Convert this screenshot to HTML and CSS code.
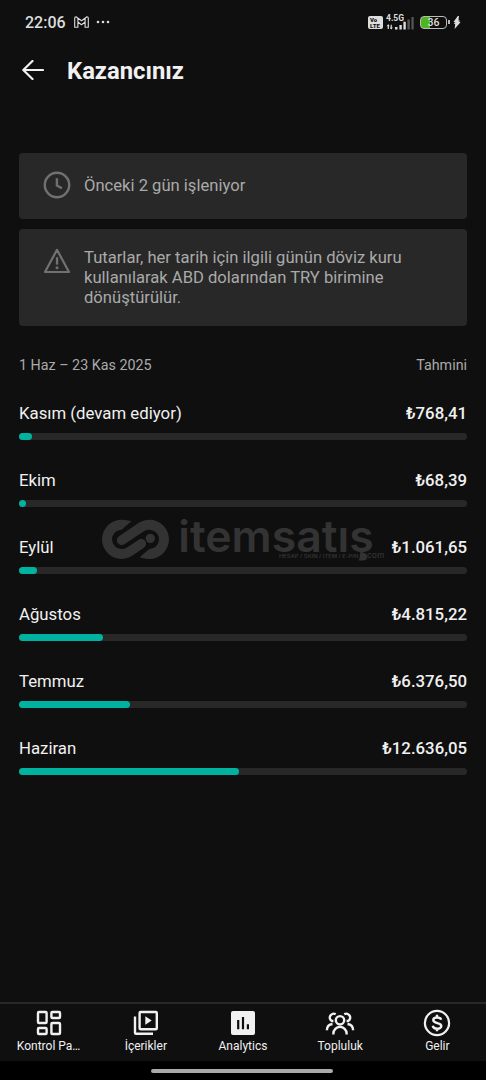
FILE: index.html
```html
<!DOCTYPE html>
<html lang="tr">
<head>
  <meta charset="UTF-8">
  <meta name="viewport" content="width=device-width, initial-scale=1">
  <title>Kazancınız</title>
  <link rel="stylesheet" href="styles.css">
</head>
<body>
  <div class="screen">
    <!-- Durum çubuğu -->
    <div class="status">
      <span class="time">22:06</span>
      <svg class="mail" width="15" height="12" viewBox="0 0 15 12" fill="none" stroke="#ddd" stroke-width="1.1" stroke-linejoin="round"><path d="M.7 2.2Q.7.7 2 .7L7.5 4.8 13 .7q1.3 0 1.3 1.5v9.1h-3.2V6L7.5 8.7 3.9 6v5.3H.7zM3.9 2.2V6M11.1 2.2V6"/></svg>
      <svg class="dots" width="14" height="4" fill="#ddd"><circle cx="2" cy="2" r="1.3"/><circle cx="7" cy="2" r="1.3"/><circle cx="12" cy="2" r="1.3"/></svg>
      <div class="volte"><span>Vo</span><span>LTE</span></div>
      <div class="signal">
        <span>4.5G</span>
        <svg width="28" height="15" viewBox="0 0 28 15"><path d="M2.3 14V9.8M5.2 9.8V14" stroke="#ddd" stroke-width="1.2"/><path d="M.6 11.3l1.7-2 1.2 2zM4 12.4l1.2 2 1.7-2z" fill="#ddd"/><path d="M9 12h2.5v2.5H9zM13.4 10h2.4v4.5h-2.4zM17.4 6.8h2.4v7.7h-2.4z" fill="#ddd"/><path d="M21.4 4.5h2.4v10h-2.4zM25.4 2h2.3v12.5h-2.3z" fill="#555"/></svg>
      </div>
      <div class="battery"><span>36</span></div>
      <svg class="bolt" width="8" height="13" viewBox="0 0 8 13"><path d="M4.8 0L.5 6.1l2.2.5-2 .6 1.5 1L1.6 13l5.9-6.8-2.1-.4 2-.8-1.9-.8L6 0z" fill="#ddd"/></svg>
    </div>

    <div class="header">
      <svg width="22" height="20" viewBox="0 0 22 20" fill="none" stroke="#f1f1f1" stroke-width="2.2" stroke-linecap="round" stroke-linejoin="round"><path d="M21 10H1.5M10.5 1L1.3 10l9.2 9"/></svg>
      <h1>Kazancınız</h1>
    </div>

    <div class="notices">
      <div class="notice">
        <svg width="28" height="28" viewBox="0 0 28 28" fill="none" stroke="#717171" stroke-width="2.4"><circle cx="14" cy="14" r="12.2"/><path d="M13.9 7.3v7.3l5 2.7"/></svg>
        <p>Önceki 2 gün işleniyor</p>
      </div>
      <div class="notice warn">
        <svg width="28" height="28" viewBox="0 0 28 28"><path d="M14 2.8L26 25H2z" fill="none" stroke="#717171" stroke-width="2.2" stroke-linejoin="round"/><path d="M12.9 10.2h2.3v7.4h-2.3z" fill="#717171"/><circle cx="14" cy="20.8" r="1.5" fill="#717171"/></svg>
        <p>Tutarlar, her tarih için ilgili günün döviz kuru kullanılarak ABD dolarından TRY birimine dönüştürülür.</p>
      </div>
    </div>

    <div class="range"><span>1 Haz – 23 Kas 2025</span><span>Tahmini</span></div>

    <!-- Aylık kazançlar -->
    <div class="months">
      <div class="month">
        <div class="line"><span>Kasım (devam ediyor)</span><b>₺768,41</b></div>
        <div class="bar"><div class="fill" style="width: 3%"></div></div>
      </div>
      <div class="month">
        <div class="line"><span>Ekim</span><b>₺68,39</b></div>
        <div class="bar"><div class="fill" style="width: 1.6%"></div></div>
      </div>
      <div class="month">
        <div class="line"><span>Eylül</span><b>₺1.061,65</b></div>
        <div class="bar"><div class="fill" style="width: 4.1%"></div></div>
      </div>
      <div class="month">
        <div class="line"><span>Ağustos</span><b>₺4.815,22</b></div>
        <div class="bar"><div class="fill" style="width: 18.7%"></div></div>
      </div>
      <div class="month">
        <div class="line"><span>Temmuz</span><b>₺6.376,50</b></div>
        <div class="bar"><div class="fill" style="width: 24.8%"></div></div>
      </div>
      <div class="month">
        <div class="line"><span>Haziran</span><b>₺12.636,05</b></div>
        <div class="bar"><div class="fill" style="width: 49.1%"></div></div>
      </div>
    </div>

    <!-- Filigran -->
    <svg class="watermark" width="283" height="42" viewBox="36 57 849 126">
      <g fill="#333">
        <path d="M124 64Q112 59 95 59A59 59 0 0 0 95 177Q112 177 124 169L162 143A14 14 0 0 0 146 119L110 143Q103 147 95 147A29 29 0 0 1 95 89Z"/>
        <path d="M124 64Q112 59 95 59A59 59 0 0 0 95 177Q112 177 124 169L186 127A14 14 0 0 0 170 103L110 143Q103 147 95 147A29 29 0 0 1 95 89Z" transform="rotate(180 136.5 118)"/>
        <circle cx="181" cy="115" r="14"/>
      </g>
      <text class="wm-name" x="265" y="156" textLength="586" lengthAdjust="spacingAndGlyphs">itemsatış</text>
      <text class="wm-sub" x="567" y="175" textLength="238" lengthAdjust="spacingAndGlyphs">HESAP / SKIN / ITEM / E-PIN</text>
      <circle cx="818" cy="170" r="9" fill="#333"/>
      <text class="wm-com" x="831" y="175" textLength="52" lengthAdjust="spacingAndGlyphs">com</text>
    </svg>

    <div class="nav">
      <div class="tab">
        <svg width="28" height="28" viewBox="0 0 28 28" fill="none" stroke="#f1f1f1" stroke-width="2.4"><rect x="3" y="3" width="8.6" height="11" rx="1"/><rect x="16.4" y="3" width="8.6" height="6" rx="1"/><rect x="3" y="19" width="8.6" height="6" rx="1"/><rect x="16.4" y="14" width="8.6" height="11" rx="1"/></svg>
        <span>Kontrol Pa…</span>
      </div>
      <div class="tab">
        <svg width="28" height="28" viewBox="0 0 28 28" fill="none" stroke="#f1f1f1" stroke-width="2.4" stroke-linejoin="round"><rect x="7.6" y="3" width="17.2" height="17.2" rx="1"/><path d="M3 7.500v16.300q0 1 1 1h17"/><path d="M13.300 7.300v8.500l6.400-4.200z" fill="#f1f1f1" stroke="none"/></svg>
        <span>İçerikler</span>
      </div>
      <div class="tab">
        <svg width="28" height="28" viewBox="0 0 28 28"><rect x="2" y="2" width="24" height="24" rx="2" fill="#f1f1f1"/><path d="M9.200 11v9.200M14 8v12.200M18.900 15.200v5" stroke="#0f0f0f" stroke-width="2.2"/></svg>
        <span>Analytics</span>
      </div>
      <div class="tab">
        <svg width="30" height="28" viewBox="0 0 30 28" fill="none" stroke="#f1f1f1" stroke-width="2.4"><circle cx="15" cy="11.3" r="4.2"/><path d="M8.400 25.500v-1a6.600 6.600 0 0 1 13.200 0v1"/><path d="M10.700 5.200A3.900 3.900 0 1 0 6.800 12h1.600M19.300 5.200A3.900 3.900 0 1 1 23.200 12h-1.600M1.900 21.300c0-3.800 2.200-5.900 5.600-6.300M28.100 21.300c0-3.800-2.200-5.900-5.600-6.300"/></svg>
        <span>Topluluk</span>
      </div>
      <div class="tab">
        <svg width="28" height="28" viewBox="0 0 28 28" fill="none" stroke="#f1f1f1" stroke-width="2.2"><circle cx="14" cy="14" r="12.1"/><path d="M18.200 10.800c-.8-3-7.800-3.300-7.900.2 0 4.200 8 2 8 6 0 3.700-7.700 3.800-8.600-.2M14 5.800v3M14 19.300v3" stroke-width="2.4"/></svg>
        <span>Gelir</span>
      </div>
    </div>
    <div class="gesture"><div class="handle"></div></div>
  </div>
</body>
</html>
```
FILE: styles.css
```css
* {
  box-sizing: border-box;
}
body {
  margin: 0;
  background: #0f0f0f;
  color: #f1f1f1;
  font-family: Roboto, sans-serif;
}
.screen {
  position: relative;
  width: 486px;
  height: 1080px;
  display: flex;
  flex-direction: column;
  overflow: hidden;
}
svg {
  display: block;
  flex: none;
}
.status {
  height: 44px;
  padding: 1px 25px 0;
  display: flex;
  align-items: center;
  color: #ddd;
}
.time {
  font-size: 16px;
  font-weight: 500;
  width: 49px;
}
.mail {
  margin-top: -1px;
}
.dots {
  margin: -1px auto 0 7px;
}
.volte {
  width: 15px;
  height: 13px;
  border-radius: 2px;
  background: #ddd;
  color: #111;
  font-size: 6px;
  line-height: 5.5px;
  font-weight: 900;
  padding: 1px 2px;
  display: flex;
  flex-direction: column;
}
.signal {
  width: 29px;
  margin-left: 3px;
  position: relative;
}
.signal span {
  position: absolute;
  top: -1px;
  left: 0;
  font-size: 8.5px;
  line-height: 8px;
  font-weight: 700;
}
.battery {
  position: relative;
  width: 27px;
  height: 13px;
  margin-left: 5px;
  border: 1.5px solid #bbb;
  border-radius: 4px;
  background: linear-gradient(90deg, #4db51d 36%, #0f0f0f 36%);
  font-size: 10.5px;
  line-height: 12px;
  font-weight: 500;
  text-align: center;
}
.battery::after {
  content: "";
  position: absolute;
  right: -4px;
  top: 3px;
  width: 2px;
  height: 4px;
  background: #bbb;
}
.bolt {
  margin-left: 6px;
}
.header {
  height: 53px;
  padding-left: 22px;
  display: flex;
  align-items: center;
  gap: 23px;
}
.header svg {
  margin-top: -1px;
}
h1 {
  margin: 0;
  font-size: 23.8px;
  line-height: 28px;
  font-weight: 700;
}
.notices {
  margin: 56px 19px 0;
  display: flex;
  flex-direction: column;
  gap: 10px;
}
.notice {
  height: 66px;
  padding: 18px 50px 0 24px;
  display: flex;
  gap: 13px;
  background: #282828;
  border-radius: 4px;
  color: #aaa;
}
.notice.warn {
  height: 97px;
}
.notice p {
  margin: 5px 0 0;
  font-size: 16.6px;
  line-height: 19.6px;
}
.notice.warn p {
  margin-top: 1.4px;
}
.range {
  margin: 31px 19px 0;
  display: flex;
  justify-content: space-between;
  font-size: 14.3px;
  line-height: 17px;
  color: #aaa;
}
.months {
  margin: 28px 19px 0;
}
.month {
  height: 67px;
}
.line {
  display: flex;
  justify-content: space-between;
  font-size: 16.8px;
  line-height: 22px;
}
.line b {
  font-weight: 500;
}
.bar {
  margin-top: 9px;
  height: 7px;
  border-radius: 4px;
  background: #282828;
}
.fill {
  height: 7px;
  border-radius: 4px;
  background: #00b3a1;
}
.watermark {
  position: absolute;
  left: 102px;
  top: 519px;
  overflow: visible;
}
.watermark text {
  fill: #333;
  font-family: Inter, sans-serif;
}
.watermark .wm-name {
  font-size: 132px;
  font-weight: 600;
}
.watermark .wm-sub {
  font-size: 14px;
  font-weight: 600;
}
.watermark .wm-com {
  font-size: 26px;
  font-weight: 500;
}
.nav {
  margin-top: auto;
  height: 59px;
  padding-top: 5px;
  border-top: 2px solid #282828;
  display: grid;
  grid-template-columns: repeat(5, 1fr);
}
.tab {
  display: flex;
  flex-direction: column;
  align-items: center;
  font-size: 12px;
  line-height: 16px;
}
.tab span {
  margin-top: 1px;
}
.gesture {
  height: 19px;
  background: #000;
  display: flex;
  justify-content: center;
}
.handle {
  width: 182px;
  height: 4px;
  margin: 8px 3px 0 0;
  border-radius: 2px;
  background: #aaa;
}
```
